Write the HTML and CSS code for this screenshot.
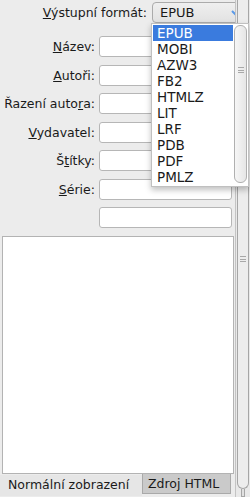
FILE: index.html
```html
<!DOCTYPE html>
<html lang="cs">
<head>
<meta charset="utf-8">
<title>Metadata</title>
<link rel="stylesheet" href="styles.css">
</head>
<body>
<div class="window">
  <div class="main">
    <div class="format-row">
      <span class="format-label"><u>V</u>ýstupní formát:</span>
      <div class="combo">
        <span class="combo-value">EPUB</span>
        <svg class="chev" width="9" height="6" viewBox="0 0 9 6"><path d="M1 1 L4.5 4.5 L8 1" fill="none" stroke="#5b9ae8" stroke-width="2"/></svg>
      </div>
    </div>
    <div class="form">
      <label class="lbl"><u>N</u>ázev:</label><div class="field"></div>
      <label class="lbl"><u>A</u>utoři:</label><div class="field"></div>
      <label class="lbl">Řazení auto<u>r</u>a:</label><div class="field"></div>
      <label class="lbl"><u>V</u>ydavatel:</label><div class="field"></div>
      <label class="lbl">Š<u>t</u>ítky:</label><div class="field"></div>
      <label class="lbl"><u>S</u>érie:</label><div class="field"></div>
      <span class="lbl"></span><div class="field"></div>
    </div>
    <div class="editor"></div>
    <div class="tabs">
      <div class="tab">Normální zobrazení</div>
      <div class="tab tab-html">Zdroj HTML</div>
    </div>
  </div>
  <div class="vscroll">
    <div class="thumb"><span class="grip"></span></div>
    <div class="stub"></div>
  </div>
  <div class="popup">
    <ul class="items">
      <li class="item sel">EPUB</li>
      <li class="item">MOBI</li>
      <li class="item">AZW3</li>
      <li class="item">FB2</li>
      <li class="item">HTMLZ</li>
      <li class="item">LIT</li>
      <li class="item">LRF</li>
      <li class="item">PDB</li>
      <li class="item">PDF</li>
      <li class="item">PMLZ</li>
    </ul>
    <div class="pscroll"><div class="pthumb"><span class="grip"></span></div></div>
  </div>
</div>
</body>
</html>
```
FILE: styles.css
```css
* { box-sizing: border-box; }
html, body { margin: 0; padding: 0; }
body {
  background: #ececec;
  font-family: "DejaVu Sans", "Liberation Sans", sans-serif;
  font-size: 12.5px;
  color: #1a1a1a;
  width: 250px;
  height: 497px;
  overflow: hidden;
}
.window {
  position: relative;
  display: flex;
  width: 250px;
  height: 497px;
}
.main {
  width: 235px;
  display: flex;
  flex-direction: column;
}
.format-row {
  display: flex;
  align-items: center;
  height: 23px;
  padding-top: 1px;
}
.format-label {
  width: 148px;
  text-align: right;
  padding-right: 1px;
  flex: none;
  white-space: nowrap;
}
.combo {
  width: 94px;
  height: 21px;
  flex: none;
  margin-left: 4px;
  display: flex;
  align-items: center;
  justify-content: space-between;
  padding: 0 5px 0 7px;
  border: 1px solid #ababab;
  border-radius: 4px;
  background: linear-gradient(#efefef, #e2e2e2);
  font-size: 13px;
}
.chev { margin-top: 1px; }
.form {
  margin-top: 13px;
  display: grid;
  grid-template-columns: 99px 133px;
  grid-auto-rows: 21px;
  row-gap: 7.5px;
}
.lbl {
  text-align: right;
  padding-right: 4px;
  line-height: 21px;
  white-space: nowrap;
}
.field {
  background: #fff;
  border: 1px solid #b6b6b6;
  border-radius: 3px;
}
.editor {
  margin: 8px 0 0 2px;
  width: 232px;
  height: 238px;
  background: #fff;
  border: 1px solid #b3b3b3;
}
.tabs {
  display: flex;
  align-items: flex-start;
  height: 22px;
}
.tab {
  height: 21px;
  line-height: 20px;
  padding: 0 4px 0 8px;
  width: 142px;
  background: #e6e6e6;
  margin-top: 1px;
  white-space: nowrap;
}
.tab-html {
  width: 89px;
  padding-left: 5px;
  margin-top: 0;
  height: 20px;
  background: #cacaca;
  border: 1px solid #a9a9a9;
  border-top: none;
}
.vscroll {
  width: 15px;
  border-left: 1px solid #c4c4c4;
  background: #e9e9e9;
  display: flex;
  flex-direction: column;
  align-items: center;
}
.thumb {
  width: 12px;
  height: 489px;
  border: 1px solid #a6a6a6;
  border-top: none;
  border-radius: 0 0 6px 6px;
  background: #ededed;
  display: flex;
  justify-content: center;
  padding-top: 256px;
}
.stub {
  width: 4px;
  height: 8px;
  border: 1px solid #a6a6a6;
  border-top: none;
  background: #e0e0e0;
}
.grip {
  display: block;
  width: 6px;
  height: 6px;
  border-top: 1px solid #a8a8a8;
  border-bottom: 1px solid #a8a8a8;
  background: linear-gradient(transparent 2px, #a8a8a8 2px, #a8a8a8 3px, transparent 3px);
}
.popup {
  position: absolute;
  left: 151px;
  top: 23px;
  width: 98px;
  height: 164px;
  background: #fff;
  border: 1px solid #c0c0c0;
  box-shadow: 0 3px 6px rgba(0,0,0,0.25);
  display: flex;
  padding: 1px 0 2px 1px;
}
.items {
  list-style: none;
  margin: 0;
  padding: 0;
  width: 81px;
}
.item {
  height: 16px;
  line-height: 16px;
  padding-left: 4px;
  font-size: 13.5px;
}
.item.sel {
  background: #3a7bde;
  color: #fff;
}
.pscroll {
  width: 15px;
  display: flex;
  justify-content: center;
}
.pthumb {
  width: 13px;
  height: 158px;
  border: 1px solid #b0b0b0;
  border-radius: 6px;
  background: linear-gradient(90deg, #f6f6f6, #e6e6e6);
  display: flex;
  justify-content: center;
  padding-top: 41px;
}
```
